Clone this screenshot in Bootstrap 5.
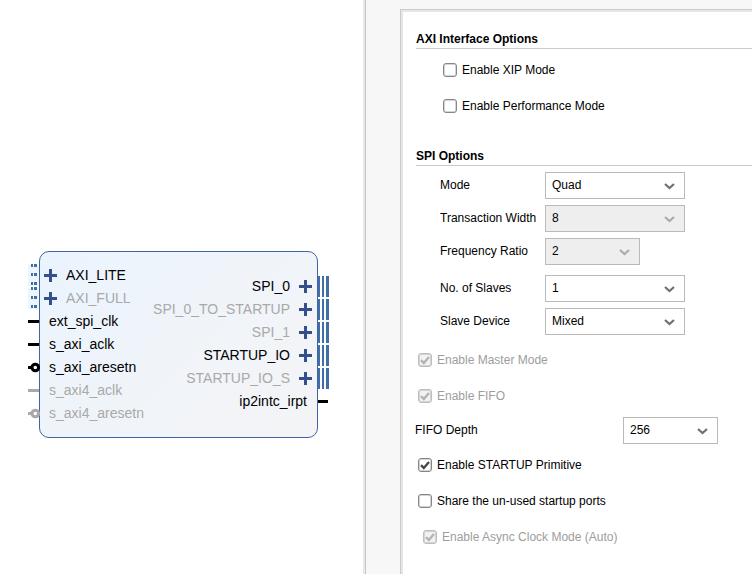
<!DOCTYPE html>
<html lang="en">
<head>
<meta charset="utf-8">
<meta name="viewport" content="width=device-width, initial-scale=1">
<title>AXI Quad SPI</title>
<link href="https://cdn.jsdelivr.net/npm/bootstrap@5.3.0/dist/css/bootstrap.min.css" rel="stylesheet">
<style>
  body { font-family: "Liberation Sans", Arial, sans-serif; font-size: 12px; line-height: 16px; color: #000; background: #fff; }
  .workspace { display: grid; grid-template-columns: minmax(0, 366fr) minmax(0, 386fr); min-height: 100vh; }
  .diagram-pane { padding: 251px 47px 0 39px; border-right: 1px solid #c6c6c6; box-shadow: inset -2px 0 #e8e8e8; }
  .options-pane { background: #f7f7f7; padding: 9px 0 0 34px; }
  .options-sheet { background: #fff; border: solid #cbcbcb; border-width: 1px 0 0 1px; box-shadow: inset 2px 2px #e6e6e6; min-height: calc(100vh - 9px); padding: 21px 0 0 15px; }

  .ip-block { border: 1px solid #4263a5; border-radius: 10px; background: linear-gradient(135deg, #eaf4fe, #f0f4f9 50%, #f4f4f6); padding: 12px 0; font-size: 14px; line-height: 23px; }
  .ports-out { padding-top: 11px; }
  .port { position: relative; height: 23px; white-space: nowrap; }
  .port-bus { gap: 9px; }
  .ports-in .port { padding-left: 9px; }
  .ports-in .port-bus { padding-left: 4px; }
  .ports-out .port { padding-right: 10px; }
  .ports-out .port-bus { padding-right: 5px; }
  .port-off { color: #a9a9a9; }
  .port svg { display: block; flex: none; }
  .stub { position: absolute; top: 0; }
  .ports-in .stub { right: 100%; }
  .ports-out .stub { left: calc(100% + 1px); }

  .section-title { font-size: 12px; line-height: 16px; font-weight: bold; border-bottom: 1px solid #cbcbcb; padding-bottom: 1px; }
  .check-row { height: 36px; gap: 5px; }
  .check-row .form-check-input { width: 14px; height: 14px; border: 1px solid #868686; border-radius: 3px; margin: 0; flex: none; background-size: 14px 14px; box-shadow: inset 0 0 0 1px #d4d4d4; }
  .check-row .form-check-input:checked { background-color: #fff; background-image: url("data:image/svg+xml,%3Csvg xmlns='http://www.w3.org/2000/svg' viewBox='0 0 14 14'%3E%3Cpath d='M3 7.2 5.8 10 11 4' fill='none' stroke='%23484848' stroke-width='2.4'/%3E%3C/svg%3E"); }
  .check-row .form-check-input:disabled { opacity: 1; border-color: #bdbdbd; background-color: #f2f2f2; background-image: url("data:image/svg+xml,%3Csvg xmlns='http://www.w3.org/2000/svg' viewBox='0 0 14 14'%3E%3Cpath d='M3 7.2 5.8 10 11 4' fill='none' stroke='%23b4b4b4' stroke-width='2.4'/%3E%3C/svg%3E"); }
  .check-row .form-check-input:disabled ~ .form-check-label { opacity: 1; color: #9d9d9d; }
  .top-checks { padding: 3px 0 24px 27px; }
  .fields { display: grid; grid-template-columns: 105px 140px; row-gap: 6px; padding: 6px 0 7px 24px; align-items: center; }
  .fields label, .depth-row label { white-space: nowrap; padding-bottom: 2px; }
  .group-start { margin-top: 4px; }
  .form-select { height: 27px; border: 1px solid #bababa; border-radius: 0; padding: 0 24px 1px 6px; font-size: 12px; line-height: 16px; color: #000; background-position: right 9px center; background-size: 11px 11px; background-image: url("data:image/svg+xml,%3Csvg xmlns='http://www.w3.org/2000/svg' viewBox='0 0 11 11'%3E%3Cpath d='M1 4l4.5 4L10 4' fill='none' stroke='%23707070' stroke-width='2.2'/%3E%3C/svg%3E"); }
  .form-select:disabled { background-color: #eee; color: #000; opacity: 1; background-image: url("data:image/svg+xml,%3Csvg xmlns='http://www.w3.org/2000/svg' viewBox='0 0 11 11'%3E%3Cpath d='M1 4l4.5 4L10 4' fill='none' stroke='%23aaaaaa' stroke-width='2.2'/%3E%3C/svg%3E"); }
  .select-short { width: 95px; }
  .depth-row { height: 33px; padding-right: 34px; margin-left: -3px; }
  .sub-row { padding-left: 5px; }
  .lower { padding-left: 2px; }
</style>
<script src="https://cdn.jsdelivr.net/npm/bootstrap@5.3.0/dist/js/bootstrap.bundle.min.js"></script>
</head>
<body>
<svg width="0" height="0" class="position-absolute" aria-hidden="true">
  <defs>
    <symbol id="plus" viewBox="0 0 13 13"><path d="M5 0h3v5h5v3H8v5H5V8H0V5h5z" fill="#33508a"/></symbol>
    <symbol id="bus-in" viewBox="0 0 12 23">
      <path d="M0 1h11v21H0z" fill="#eef6fd"/>
      <path d="M3 0h2v3H3zM6 0h3v3H6zM3 9h2v3H3zM6 9h3v3H6zM3 18h2v3H3zM6 18h3v3H6z" fill="#3f6fa6"/>
    </symbol>
    <symbol id="bus-out" viewBox="0 0 12 23"><path d="M0 1h2v21H0zM4 1h2v21H4zM8 1h3v21H8z" fill="#3f6fa6"/></symbol>
    <symbol id="wire" viewBox="0 0 12 23"><path d="M0 10h11v3H0z" fill="currentColor"/></symbol>
    <symbol id="wire-out" viewBox="0 0 12 23"><path d="M0 10h10v3H0z" fill="currentColor"/></symbol>
    <symbol id="inverted" viewBox="0 0 12 23"><path d="M0 10h4v3H0z" fill="currentColor"/><circle cx="7.3" cy="11.5" r="3.3" fill="#fff" stroke="currentColor" stroke-width="3"/></symbol>
  </defs>
</svg>
<div class="workspace">
  <section class="diagram-pane" aria-label="IP symbol">
    <div class="ip-block d-flex justify-content-between">
      <div class="ports-in">
        <div class="port port-bus d-flex align-items-center"><svg class="stub" width="12" height="23"><use href="#bus-in"/></svg><svg width="13" height="13"><use href="#plus"/></svg><span>AXI_LITE</span></div>
        <div class="port port-bus port-off d-flex align-items-center"><svg class="stub" width="12" height="23"><use href="#bus-in"/></svg><svg width="13" height="13"><use href="#plus"/></svg><span>AXI_FULL</span></div>
        <div class="port"><svg class="stub" width="12" height="23"><use href="#wire"/></svg>ext_spi_clk</div>
        <div class="port"><svg class="stub" width="12" height="23"><use href="#wire"/></svg>s_axi_aclk</div>
        <div class="port"><svg class="stub" width="12" height="23"><use href="#inverted"/></svg>s_axi_aresetn</div>
        <div class="port port-off"><svg class="stub" width="12" height="23"><use href="#wire"/></svg>s_axi4_aclk</div>
        <div class="port port-off"><svg class="stub" width="12" height="23"><use href="#inverted"/></svg>s_axi4_aresetn</div>
      </div>
      <div class="ports-out text-end">
        <div class="port port-bus d-flex align-items-center justify-content-end"><span>SPI_0</span><svg width="13" height="13"><use href="#plus"/></svg><svg class="stub" width="12" height="23"><use href="#bus-out"/></svg></div>
        <div class="port port-bus port-off d-flex align-items-center justify-content-end"><span>SPI_0_TO_STARTUP</span><svg width="13" height="13"><use href="#plus"/></svg><svg class="stub" width="12" height="23"><use href="#bus-out"/></svg></div>
        <div class="port port-bus port-off d-flex align-items-center justify-content-end"><span>SPI_1</span><svg width="13" height="13"><use href="#plus"/></svg><svg class="stub" width="12" height="23"><use href="#bus-out"/></svg></div>
        <div class="port port-bus d-flex align-items-center justify-content-end"><span>STARTUP_IO</span><svg width="13" height="13"><use href="#plus"/></svg><svg class="stub" width="12" height="23"><use href="#bus-out"/></svg></div>
        <div class="port port-bus port-off d-flex align-items-center justify-content-end"><span>STARTUP_IO_S</span><svg width="13" height="13"><use href="#plus"/></svg><svg class="stub" width="12" height="23"><use href="#bus-out"/></svg></div>
        <div class="port">ip2intc_irpt<svg class="stub" width="12" height="23"><use href="#wire-out"/></svg></div>
      </div>
    </div>
  </section>

  <main class="options-pane">
    <form class="options-sheet">
      <h2 class="section-title mb-0">AXI Interface Options</h2>
      <div class="top-checks">
        <div class="check-row d-flex align-items-center"><input class="form-check-input" type="checkbox" id="xip"><label class="form-check-label" for="xip">Enable XIP Mode</label></div>
        <div class="check-row d-flex align-items-center"><input class="form-check-input" type="checkbox" id="perf"><label class="form-check-label" for="perf">Enable Performance Mode</label></div>
      </div>

      <h2 class="section-title mb-0">SPI Options</h2>
      <div class="fields">
        <label for="mode">Mode</label>
        <select class="form-select" id="mode"><option>Quad</option></select>
        <label for="width">Transaction Width</label>
        <select class="form-select" id="width" disabled><option>8</option></select>
        <label for="ratio">Frequency Ratio</label>
        <select class="form-select select-short" id="ratio" disabled><option>2</option></select>
        <label class="group-start" for="slaves">No. of Slaves</label>
        <select class="form-select group-start" id="slaves"><option>1</option></select>
        <label for="device">Slave Device</label>
        <select class="form-select" id="device"><option>Mixed</option></select>
      </div>
      <div class="lower">
        <div class="check-row d-flex align-items-center"><input class="form-check-input" type="checkbox" id="master" checked disabled><label class="form-check-label" for="master">Enable Master Mode</label></div>
        <div class="check-row d-flex align-items-center"><input class="form-check-input" type="checkbox" id="fifo" checked disabled><label class="form-check-label" for="fifo">Enable FIFO</label></div>
        <div class="depth-row d-flex align-items-center justify-content-between">
          <label for="depth">FIFO Depth</label>
          <select class="form-select select-short" id="depth"><option>256</option></select>
        </div>
        <div class="check-row d-flex align-items-center"><input class="form-check-input" type="checkbox" id="startup" checked><label class="form-check-label" for="startup">Enable STARTUP Primitive</label></div>
        <div class="check-row d-flex align-items-center"><input class="form-check-input" type="checkbox" id="share"><label class="form-check-label" for="share">Share the un-used startup ports</label></div>
        <div class="check-row sub-row d-flex align-items-center"><input class="form-check-input" type="checkbox" id="async" checked disabled><label class="form-check-label" for="async">Enable Async Clock Mode (Auto)</label></div>
      </div>
    </form>
  </main>
</div>
</body>
</html>
